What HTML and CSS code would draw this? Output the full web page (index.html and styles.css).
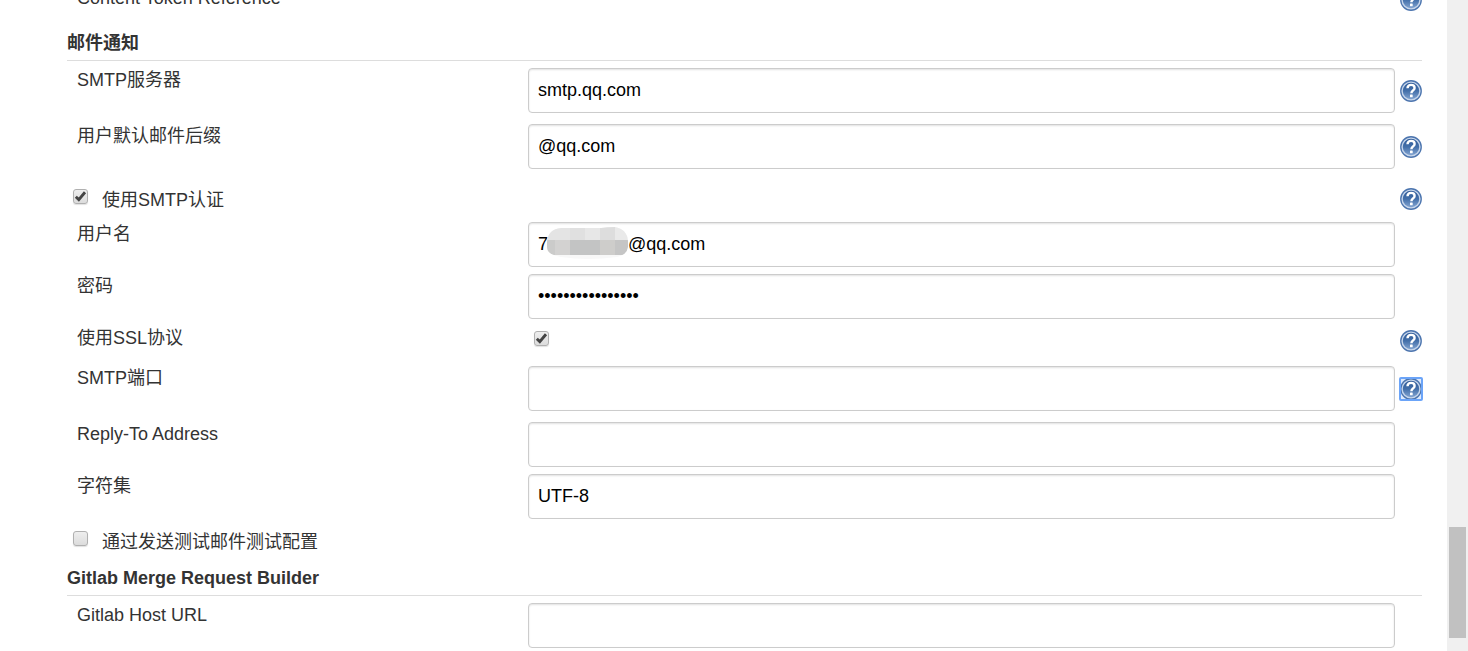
FILE: index.html
```html
<!DOCTYPE html>
<html lang="zh-CN">
<head>
<meta charset="utf-8">
<title>邮件通知</title>
<link rel="stylesheet" href="styles.css">
</head>
<body>
<svg class="defs" aria-hidden="true">
  <defs>
    <linearGradient id="disc" x1="0" y1="0" x2="0" y2="1">
      <stop offset="0" stop-color="#2c5896"/>
      <stop offset="0.5" stop-color="#4470aa"/>
      <stop offset="1" stop-color="#86a7d3"/>
    </linearGradient>
    <symbol id="help" viewBox="0 0 22 22">
      <circle cx="11" cy="11" r="10.900" fill="#4b74ae"/>
      <circle cx="11" cy="11" r="8.900" fill="url(#disc)" stroke="#c6d5ea" stroke-width="1.400"/>
      <path d="M7.500 8.300C7.600 6 9 4.900 11.100 4.900C13.200 4.900 14.600 6.100 14.600 7.900C14.600 10.300 11.400 10.500 11.400 13.200" fill="none" stroke="#fff" stroke-width="2.400"/>
      <rect x="10" y="14.500" width="2.700" height="2.700" rx="0.500" fill="#fff"/>
    </symbol>
  </defs>
</svg>
<main class="config">
  <form>
    <div class="row row-first">
      <span class="label">Content Token Reference</span>
      <button type="button" class="help" aria-label="Help: Content Token Reference"><svg><use href="#help"/></svg></button>
    </div>

    <h2 class="heading">邮件通知</h2>
    <div class="row row-help">
      <label class="label" for="server">SMTP服务器</label>
      <input class="text" id="server" type="text" value="smtp.qq.com">
      <button type="button" class="help" aria-label="Help: SMTP服务器"><svg><use href="#help"/></svg></button>
    </div>
    <div class="row row-help">
      <label class="label" for="suffix">用户默认邮件后缀</label>
      <input class="text" id="suffix" type="text" value="@qq.com">
      <button type="button" class="help" aria-label="Help: 用户默认邮件后缀"><svg><use href="#help"/></svg></button>
    </div>
    <div class="row row-check row-auth">
      <div class="option">
        <input class="tick" id="auth" type="checkbox" checked>
        <label for="auth">使用SMTP认证</label>
      </div>
      <button type="button" class="help" aria-label="Help: 使用SMTP认证"><svg><use href="#help"/></svg></button>
    </div>
    <div class="row">
      <label class="label" for="user">用户名</label>
      <div class="masked">
        <input class="text" id="user" type="text" value="7                @qq.com">
        <svg class="mosaic" viewBox="0 0 82 32" aria-hidden="true">
          <clipPath id="blob"><path d="M0 15Q1 2 14 1H54Q60 0 68 0Q80 2 81 14V20Q80 28 70 30Q40 34 14 30Q0 28 0 20Z"/></clipPath>
          <g clip-path="url(#blob)">
            <path fill="#f8f8f8" d="M0 0H82V32H0Z"/>
            <path fill="#e4e4e4" d="M0 0H23V13H0Z"/>
            <path fill="#e0e0e0" d="M23 0H38V13H23Z"/>
            <path fill="#e7e7e7" d="M38 0H53V13H38Z"/>
            <path fill="#dddddd" d="M53 0H68V13H53Z"/>
            <path fill="#e9e9e9" d="M68 0H82V13H68Z"/>
            <path fill="#cbcbca" d="M0 13H8V28H0Z"/>
            <path fill="#d3d2d1" d="M8 13H23V28H8Z"/>
            <path fill="#c3c4c4" d="M23 13H53V28H23Z"/>
            <path fill="#cecdcb" d="M53 13H68V28H53Z"/>
            <path fill="#c5c5c5" d="M68 13H82V28H68Z"/>
          </g>
        </svg>
      </div>
    </div>
    <div class="row">
      <label class="label" for="password">密码</label>
      <input class="text" id="password" type="password" value="abcdefghijklmnop">
    </div>
    <div class="row row-ssl">
      <label class="label" for="ssl">使用SSL协议</label>
      <div class="option"><input class="tick" id="ssl" type="checkbox" checked></div>
      <button type="button" class="help" aria-label="Help: 使用SSL协议"><svg><use href="#help"/></svg></button>
    </div>
    <div class="row row-help">
      <label class="label" for="port">SMTP端口</label>
      <input class="text" id="port" type="text">
      <button type="button" class="help help-focused" aria-label="Help: SMTP端口"><svg><use href="#help"/></svg></button>
    </div>
    <div class="row">
      <label class="label" for="reply">Reply-To Address</label>
      <input class="text" id="reply" type="text">
    </div>
    <div class="row">
      <label class="label" for="charset">字符集</label>
      <input class="text" id="charset" type="text" value="UTF-8">
    </div>
    <div class="row row-check">
      <div class="option">
        <input class="tick" id="test" type="checkbox">
        <label for="test">通过发送测试邮件测试配置</label>
      </div>
    </div>

    <h2 class="heading">Gitlab Merge Request Builder</h2>
    <div class="row">
      <label class="label" for="host">Gitlab Host URL</label>
      <input class="text" id="host" type="text">
    </div>
  </form>
</main>
<div class="scrollbar" aria-hidden="true"><div class="thumb"></div></div>
</body>
</html>
```
FILE: styles.css
```css
* {
  box-sizing: border-box;
}

body {
  display: flex;
  height: 100vh;
  margin: 0;
  overflow: hidden;
  background: #fff;
  color: #333;
  font: 18px/20px "Liberation Sans", "Noto Sans CJK SC", sans-serif;
}

.defs {
  position: absolute;
  width: 0;
  height: 0;
}

.config {
  flex: 1;
  min-width: 0;
  overflow: hidden;
  padding: 0 25px 0 67px;
}

.row {
  display: grid;
  grid-template-columns: 461px 1fr 27px;
  align-items: start;
  padding-top: 7px;
}

.row-help {
  padding-bottom: 4px;
}

.row-first {
  min-height: 47px;
  margin-top: -21px;
}

.label {
  padding: 2px 0 0 10px;
}

.heading {
  margin: 0;
  padding: 7px 0;
  border-bottom: 1px solid #ddd;
  font-size: 18px;
  line-height: 20px;
}

.text {
  width: 100%;
  height: 45px;
  padding: 0 9px;
  border: 1px solid #ccc;
  border-radius: 4px;
  background: #fff;
  box-shadow: inset 0 1px 2px rgba(0, 0, 0, 0.12);
  color: #000;
  font: inherit;
}

.help {
  grid-column: 3;
  justify-self: end;
  width: 22px;
  height: 22px;
  margin-top: 12px;
  padding: 0;
  border: 0;
  background: none;
}

.help svg {
  display: block;
  width: 22px;
  height: 22px;
}

.help-focused {
  border-radius: 1px;
  outline: 2px solid #6ba4f8;
  outline-offset: -1px;
  background: #dce9fc;
}

.row-first .help {
  margin-top: 3px;
}

.row-ssl {
  min-height: 40px;
}

.row-ssl .help,
.row-check .help {
  margin-top: 4px;
}

.row-check {
  min-height: 42px;
}

.row-auth {
  padding-top: 11px;
}

.option {
  display: flex;
  align-items: flex-start;
  gap: 14px;
  padding: 5px 0 0 6px;
}

.row-check .option {
  grid-column: 1 / 3;
}

.option label {
  padding-top: 1px;
}

.tick {
  appearance: none;
  width: 15px;
  height: 15px;
  margin: 0;
  border: 1px solid #b0b0b0;
  border-radius: 3px;
  background: linear-gradient(#eee, #dcdcdc);
  box-shadow: 0 1px 1px rgba(0, 0, 0, 0.12);
}

.tick:checked {
  background: url("data:image/svg+xml,%3Csvg xmlns='http://www.w3.org/2000/svg' viewBox='0 0 13 13'%3E%3Cpath d='M1.800 6.800L4.800 9.600L11 2.300' fill='none' stroke='%23444' stroke-width='2.900'/%3E%3C/svg%3E"), linear-gradient(#eee, #dcdcdc);
}

.masked {
  position: relative;
}

.mosaic {
  position: absolute;
  top: 5px;
  left: 19px;
  width: 82px;
  height: 32px;
}

.scrollbar {
  display: flex;
  flex-direction: column;
  justify-content: flex-end;
  width: 21px;
  padding: 0 2px 13px;
  background: #f0f0f0;
}

.thumb {
  height: 111px;
  background: #c1c1c1;
}
```
